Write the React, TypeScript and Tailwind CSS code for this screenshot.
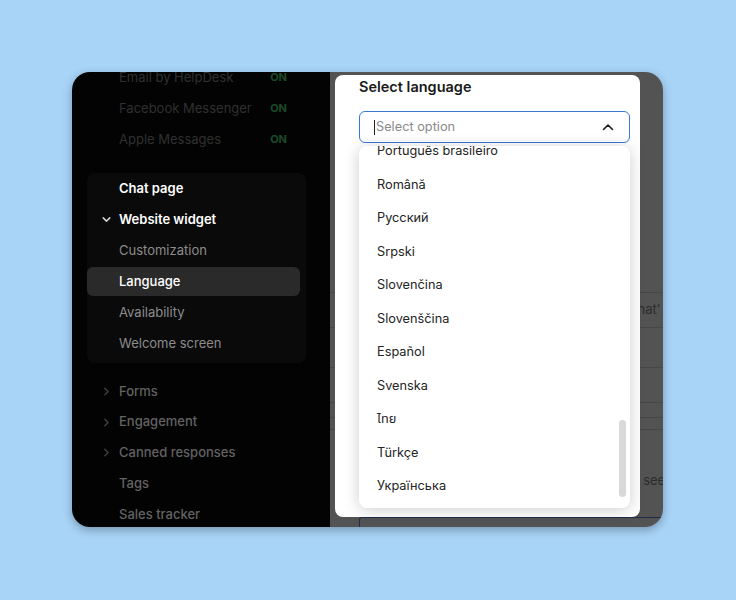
import React from "react";

const font = { fontFamily: "Inter, 'Noto Sans', sans-serif" };

function ChevDown({ className }: { className?: string }) {
  return (
    <svg viewBox="0 0 10 10" className={className} fill="none" stroke="currentColor" strokeWidth="1.4" strokeLinecap="round" strokeLinejoin="round">
      <path d="M2 3.5 L5 6.5 L8 3.5" />
    </svg>
  );
}
function ChevRight({ className }: { className?: string }) {
  return (
    <svg viewBox="0 0 10 10" className={className} fill="none" stroke="currentColor" strokeWidth="1.3" strokeLinecap="round" strokeLinejoin="round">
      <path d="M3.5 2 L6.5 5 L3.5 8" />
    </svg>
  );
}
function ChevUp({ className }: { className?: string }) {
  return (
    <svg viewBox="0 0 12 8" className={className} fill="none" stroke="currentColor" strokeWidth="1.6" strokeLinecap="round" strokeLinejoin="round">
      <path d="M1.5 6.5 L6 2 L10.5 6.5" />
    </svg>
  );
}

const channels = ["Email by HelpDesk", "Facebook Messenger", "Apple Messages"];
const langs = [
  "Português brasileiro",
  "Română",
  "Русский",
  "Srpski",
  "Slovenčina",
  "Slovenščina",
  "Español",
  "Svenska",
  "ไทย",
  "Türkçe",
  "Українська",
];

export default function App() {
  return (
    <div className="w-[736px] h-[600px] bg-[#a8d4f8] pt-[72px] pl-[72px]" style={font}>
      <div className="w-[591px] h-[455px] rounded-[18px] overflow-hidden flex shadow-[0_3px_10px_rgba(0,0,0,0.3)]">
        {/* Sidebar */}
        <div className="w-[258px] h-full bg-[#030303] pl-[15px] overflow-hidden">
          <div className="mt-[-10px] flex flex-col">
            {channels.map((c) => (
              <div key={c} className="h-[31px] flex items-center pl-[32px] pr-[27px] text-[13px] text-[#303030]">
                <span className="flex-1">{c}</span>
                <span className="text-[11px] font-bold text-[#1b4a28] mr-[16px]">ON</span>
              </div>
            ))}
            <div className="mt-[18px] w-[219px] bg-[#0a0a0a] rounded-lg pb-[4px] flex flex-col text-[13px]">
              <div className="h-[31px] flex items-center pl-[32px] font-semibold text-white">Chat page</div>
              <div className="h-[31px] flex items-center pl-[14px] font-semibold text-white">
                <ChevDown className="w-[11px] h-[11px] text-[#cfcfcf] mr-[7px]" />
                Website widget
              </div>
              <div className="h-[31px] flex items-center pl-[32px] text-[#8c8c8c]">Customization</div>
              <div className="h-[31px] py-[1px]">
                <div className="h-[29px] w-[213px] rounded-md bg-[#2a2a2a] flex items-center pl-[32px] font-medium text-white">Language</div>
              </div>
              <div className="h-[31px] flex items-center pl-[32px] text-[#8c8c8c]">Availability</div>
              <div className="h-[31px] flex items-center pl-[32px] text-[#8c8c8c]">Welcome screen</div>
            </div>
            <div className="mt-[13px] flex flex-col text-[13px] font-medium text-[#626262]">
              {["Forms", "Engagement", "Canned responses"].map((t) => (
                <div key={t} className="h-[30.75px] flex items-center pl-[14px]">
                  <ChevRight className="w-[11px] h-[11px] text-[#404040] mr-[7px]" />
                  {t}
                </div>
              ))}
              <div className="h-[30.75px] flex items-center pl-[32px]">Tags</div>
              <div className="h-[30.75px] flex items-center pl-[32px]">Sales tracker</div>
            </div>
          </div>
        </div>

        {/* Right area with dimmed page behind modal */}
        <div className="flex-1 h-full bg-[#535353] relative overflow-hidden">
          <div className="flex flex-col text-[13px] text-[#2c2c2c]">
            <div className="h-[221px] border-b border-[#474747]" />
            <div className="h-[35px] border-b border-[#474747] flex items-center pl-[298px] whitespace-nowrap">Chat'</div>
            <div className="h-[40px] border-b border-[#474747]" />
            <div className="h-[35px] border-b border-[#474747]" />
            <div className="h-[15px] border-b border-[#474747]" />
            <div className="h-[12px] border-b border-[#474747]" />
            <div className="h-[87px] pt-[42px] leading-[16px] pl-[306px] whitespace-nowrap">I see</div>
            <div className="ml-[29px] h-[20px] border-t border-l border-[#1f2d4a] rounded-tl-[3px]" />
          </div>

          {/* Modal */}
          <div className="absolute left-[5px] top-[3px] w-[305px] h-[442px] bg-white rounded-lg pl-6 pr-[10px]">
            <div className="h-[24px] flex items-center text-[14.5px] font-semibold text-[#1a1a1a]">Select language</div>
            <div className="relative mt-[12px]">
              <div className="h-[32px] rounded-md border border-[#3a78d4] flex items-center pl-[14px] pr-[15px]">
                <span className="w-px h-[15px] bg-[#222] mr-[1px]" />
                <span className="flex-1 text-[12.75px] text-[#8a8a8a]">Select option</span>
                <ChevUp className="w-[12px] h-[8px] text-[#1a1a1a]" />
              </div>
              <div className="absolute left-0 right-0 top-[35px] h-[362px] bg-white rounded-lg shadow-[0_2px_16px_rgba(0,0,0,0.2)] overflow-hidden">
                <div className="mt-[-12px] flex flex-col">
                  {langs.map((l) => (
                    <div key={l} className="h-[33.5px] flex items-center pl-[18px] text-[12.75px] text-[#242424]" style={{ fontFamily: "Inter, 'Noto Sans', 'Noto Sans Thai', 'DejaVu Sans', sans-serif" }}>
                      {l}
                    </div>
                  ))}
                </div>
                <div className="absolute right-[4px] bottom-[11px] w-[7px] h-[77px] rounded-full bg-[#d9d9d9]" />
              </div>
            </div>
          </div>
        </div>
      </div>
    </div>
  );
}
